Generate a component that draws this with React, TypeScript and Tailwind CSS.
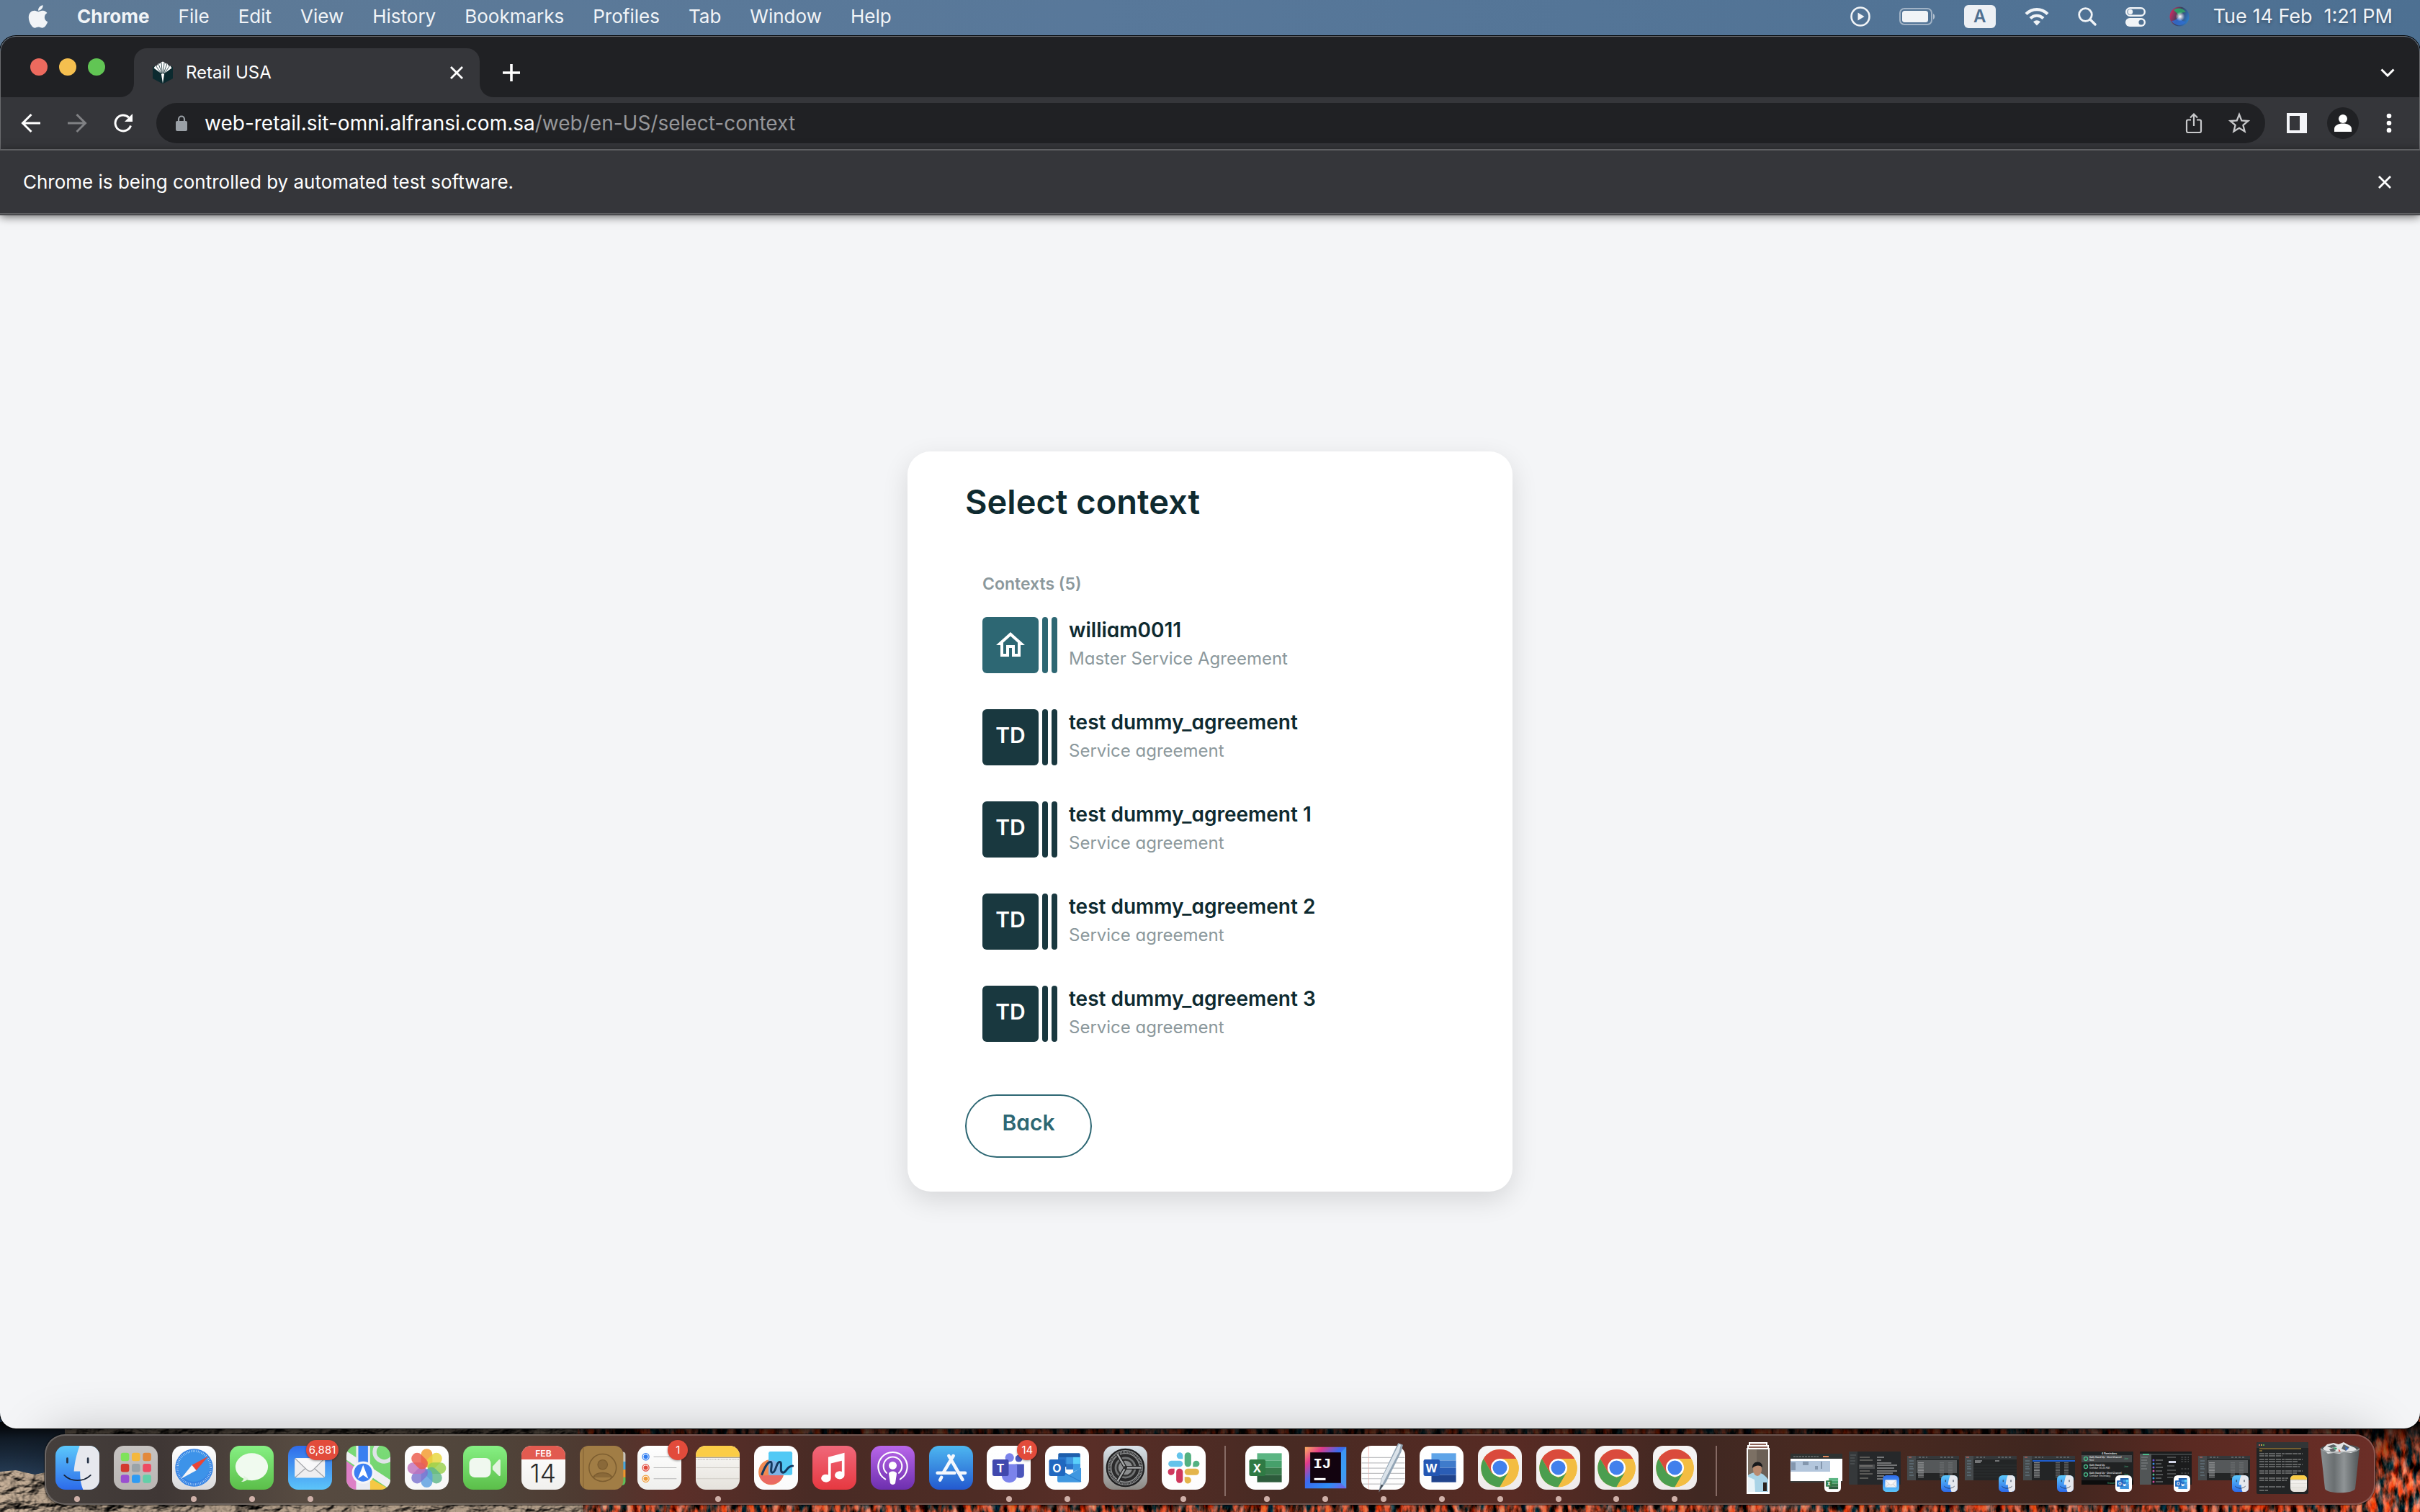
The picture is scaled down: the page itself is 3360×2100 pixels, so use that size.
import type { ReactNode } from "react";
import { FaApple } from "react-icons/fa";
import { MdOutlineHome } from "react-icons/md";

const menus = ["File", "Edit", "View", "History", "Bookmarks", "Profiles", "Tab", "Window", "Help"];

const contexts = [
  { name: "william0011", kind: "Master Service Agreement", home: true },
  { name: "test dummy_agreement", kind: "Service agreement" },
  { name: "test dummy_agreement 1", kind: "Service agreement" },
  { name: "test dummy_agreement 2", kind: "Service agreement" },
  { name: "test dummy_agreement 3", kind: "Service agreement" },
];

/* ---------- wallpaper ---------- */

function Wallpaper() {
  return (
    <svg className="absolute inset-0 h-full w-full" viewBox="0 0 3360 2100" preserveAspectRatio="none" aria-hidden="true">
      <defs>
        <linearGradient id="sky" x1="0" x2="1" y1="0" y2="0">
          <stop offset="0" stopColor="#5e7a96" />
          <stop offset="0.45" stopColor="#58789a" />
          <stop offset="1" stopColor="#4d7092" />
        </linearGradient>
        <linearGradient id="dusk" x1="0" x2="0" y1="0" y2="1">
          <stop offset="0" stopColor="#101a28" />
          <stop offset="0.5" stopColor="#22364d" />
          <stop offset="1" stopColor="#2c4560" />
        </linearGradient>
        <linearGradient id="shade" x1="0" x2="0" y1="0" y2="1">
          <stop offset="0" stopColor="#000" stopOpacity="0.95" />
          <stop offset="0.25" stopColor="#000" stopOpacity="0.5" />
          <stop offset="0.8" stopColor="#000" stopOpacity="0" />
        </linearGradient>
        <filter id="rock" x="0" y="0" width="1" height="1" colorInterpolationFilters="sRGB">
          <feTurbulence type="fractalNoise" baseFrequency="0.03 0.05" numOctaves="4" seed="7" />
          <feDiffuseLighting lightingColor="#cbb49c" surfaceScale="12">
            <feDistantLight azimuth="235" elevation="55" />
          </feDiffuseLighting>
          <feComposite in2="SourceGraphic" operator="in" />
        </filter>
        <filter id="grass" x="0" y="0" width="1" height="1" colorInterpolationFilters="sRGB">
          <feTurbulence type="fractalNoise" baseFrequency="0.1 0.04" numOctaves="4" seed="3" />
          <feColorMatrix values="3.200 0 0 0 -1.050  1 0.700 0 0 -0.600  0.500 0.900 0 0 -0.530  0 0 0 0 1" />
          <feComposite in2="SourceGraphic" operator="in" />
        </filter>
      </defs>
      <rect width="3360" height="300" fill="url(#sky)" />
      <rect y="1900" width="3360" height="200" fill="url(#dusk)" />
      <path d="M0 2044L22 2042L48 2048L90 2040V1980H1000V2100H0z" fill="#fff" filter="url(#rock)" />
      <path d="M800 1960H3360V2100H810z" fill="#fff" filter="url(#grass)" />
      <rect y="1975" width="3360" height="90" fill="url(#shade)" />
    </svg>
  );
}

/* ---------- menu bar ---------- */

function MenuBar() {
  return (
    <header className="relative flex h-12 items-center justify-between pb-0.5 pl-[39px] pr-[38px] text-[26px] leading-8 text-[#f1f4f7] [text-shadow:0_2px_4px_rgba(0,0,0,0.25)]">
      <nav className="flex items-center gap-10">
        <button aria-label="Apple menu">
          <FaApple className="h-9 w-7" />
        </button>
        <button className="font-bold">Chrome</button>
        {menus.map((m) => (
          <button key={m}>{m}</button>
        ))}
      </nav>
      <div className="flex items-center gap-[33px]">
        <div className="flex items-center gap-10">
          <button aria-label="Now playing">
            <svg className="size-7" viewBox="0 0 28 28" fill="currentColor">
              <circle cx="14" cy="14" r="12.5" fill="none" stroke="currentColor" strokeWidth="2.6" />
              <path d="M10.5 8.5v11l9-5.500z" />
            </svg>
          </button>
          <button aria-label="Battery">
            <svg className="h-6 w-[50px]" viewBox="0 0 50 24" fill="currentColor">
              <rect x="1" y="1" width="44" height="22" rx="6" fill="none" stroke="currentColor" strokeOpacity="0.5" strokeWidth="2" />
              <rect x="4" y="4" width="36" height="16" rx="3.500" />
              <path d="M47 8c3 1.500 3 6.500 0 8z" opacity="0.6" />
            </svg>
          </button>
          <button className="flex h-8 w-11 items-center justify-center rounded-md bg-[#edf0f4] text-[24px] font-semibold text-[#4f6f90] [text-shadow:none]">A</button>
          <button aria-label="Wi-Fi">
            <svg className="h-[26px] w-[34px]" viewBox="0 0 34 26" fill="none" stroke="currentColor" strokeWidth="4.200">
              <path d="M2 9.500C10.500 1 23.500 1 32 9.500" />
              <path d="M8 15.500c5.200-5 12.800-5 18 0" />
              <path d="M17 25.500l-5-5.200c3-2.800 7-2.800 10 0z" fill="currentColor" stroke="none" />
            </svg>
          </button>
          <button aria-label="Search">
            <svg className="size-[26px]" viewBox="0 0 26 26" fill="none" stroke="currentColor" strokeWidth="2.800" strokeLinecap="round">
              <circle cx="10.500" cy="10.500" r="8.800" />
              <path d="M17 17l7 7" strokeWidth="3.400" />
            </svg>
          </button>
          <button aria-label="Control Centre">
            <svg className="size-7" viewBox="0 0 28 28">
              <rect x="1.200" y="2.200" width="25.600" height="10.600" rx="5.300" fill="none" stroke="#f1f4f7" strokeWidth="2.400" />
              <circle cx="6.800" cy="7.500" r="3.400" fill="#f1f4f7" />
              <rect x="0" y="16" width="28" height="12" rx="6" fill="#f1f4f7" />
              <circle cx="22" cy="22" r="3.600" fill="#4f7193" />
            </svg>
          </button>
        </div>
        <button aria-label="Siri">
          <svg className="size-7" viewBox="0 0 28 28">
            <defs>
              <linearGradient id="siri" x1="0" x2="1" y1="0.3" y2="0.7">
                <stop offset="0" stopColor="#d22c62" />
                <stop offset="0.45" stopColor="#3b3f5c" />
                <stop offset="1" stopColor="#2b7fd0" />
              </linearGradient>
              <radialGradient id="siriCore">
                <stop offset="0" stopColor="#fff" />
                <stop offset="1" stopColor="#fff" stopOpacity="0" />
              </radialGradient>
            </defs>
            <circle cx="14" cy="14" r="13.500" fill="url(#siri)" />
            <path d="M6 5c5-4 13-3 17 3-5 0-9 2-10 5C11 9 8 7 6 5z" fill="#2f9a68" />
            <path d="M3 20c5 0 8-3 11-7 1 5 4 8 9 8-5 7-15 7-20-1z" fill="#2f6fd6" opacity="0.8" />
            <circle cx="15" cy="14" r="6.500" fill="url(#siriCore)" />
          </svg>
        </button>
        <time className="flex gap-4 text-[27px]">
          <span>Tue 14 Feb</span>
          <span>1:21 PM</span>
        </time>
      </div>
    </header>
  );
}

/* ---------- browser chrome ---------- */

function Cross() {
  return (
    <svg className="size-[18px]" viewBox="0 0 18 18" fill="none" stroke="currentColor" strokeWidth="2.800">
      <path d="M1 1l16 16M17 1L1 17" />
    </svg>
  );
}

function TabStrip() {
  return (
    <div className="flex h-[84px] items-end justify-between bg-[#202124] pr-[34px]">
      <div className="flex items-end">
        <div className="flex h-[84px] items-center gap-4 pl-[41px] pr-5">
          <button aria-label="Close window" className="size-6 rounded-full bg-[#ed6a5e]" />
          <button aria-label="Minimise window" className="size-6 rounded-full bg-[#f5bf4f]" />
          <button aria-label="Zoom window" className="size-6 rounded-full bg-[#61c554]" />
        </div>
        <div className="flex items-end">
          <svg className="size-5 text-[#35363a]" viewBox="0 0 20 20" fill="currentColor" aria-hidden="true">
            <path d="M20 0v20H0C12 20 20 12 20 0z" />
          </svg>
          <div className="flex h-[68px] w-[480px] items-center rounded-t-[18px] bg-[#35363a] pl-[26px] pr-[23px] text-white">
            <svg className="h-8 w-7" viewBox="0 0 28 32" aria-hidden="true">
              <path d="M0 8L5 6h18l5 2v16l-14 7.500L0 24z" fill="#0c2a2f" />
              <path d="M14 31L11.800 17 1.500 9.500 3.500 6.500 6 6.200 7.500 3.500l2.500-.3L12 1.500 14 .500l2 1 2 1.700 2.500.3L22 6.200l2.500.3 2 3L16.200 17z" fill="#fff" />
              <path d="M12 2l1.300 15M16 2l-1.300 15M8 3.500l5 14M20 3.500l-5 14M4.500 6.500l8 11.500M23.500 6.500l-8 11.500" stroke="#0c2a2f" strokeWidth="0.800" />
            </svg>
            <span className="ml-[18px] grow text-[24px] leading-8">Retail USA</span>
            <button aria-label="Close tab"><Cross /></button>
          </div>
          <svg className="size-5 text-[#35363a]" viewBox="0 0 20 20" fill="currentColor" aria-hidden="true">
            <path d="M0 0v20h20C8 20 0 12 0 0z" />
          </svg>
        </div>
        <button aria-label="New tab" className="mb-[22px] ml-3 text-white">
          <svg className="size-6" viewBox="0 0 24 24" stroke="currentColor" strokeWidth="3.600">
            <path d="M12 0v24M0 12h24" />
          </svg>
        </button>
      </div>
      <button aria-label="Search tabs" className="mb-7 text-white">
        <svg className="h-3 w-5" viewBox="0 0 20 12" fill="none" stroke="currentColor" strokeWidth="3">
          <path d="M1.500 1.500L10 10l8.500-8.500" />
        </svg>
      </button>
    </div>
  );
}

function Toolbar() {
  return (
    <div className="flex h-[72px] items-center bg-[#35363a] pl-7 pr-9 text-white">
      <div className="flex gap-9">
        <button aria-label="Back to previous page">
          <svg className="size-7" viewBox="0 0 28 28" fill="none" stroke="currentColor" strokeWidth="3">
            <path d="M27 14H3M14.500 2L2.500 14l12 12" />
          </svg>
        </button>
        <button aria-label="Forward" className="text-[#808184]">
          <svg className="size-7" viewBox="0 0 28 28" fill="none" stroke="currentColor" strokeWidth="3">
            <path d="M1 14h24M13.500 2l12 12-12 12" />
          </svg>
        </button>
        <button aria-label="Reload">
          <svg className="size-7" viewBox="0 0 28 28" fill="none" stroke="currentColor" strokeWidth="3">
            <path d="M24.500 17.500a11 11 0 1 1-2.600-11.200" />
            <path d="M27 1v11H16z" fill="currentColor" stroke="none" />
          </svg>
        </button>
      </div>
      <div className="ml-8 flex h-14 grow items-center rounded-full bg-[#202124] pl-[27px] pr-[21px]">
        <svg className="h-[22px] w-4 text-[#9aa0a6]" viewBox="0 0 16 22" aria-hidden="true">
          <path d="M4 9V5.500a4 4 0 0 1 8 0V9" fill="none" stroke="currentColor" strokeWidth="2.200" />
          <rect y="8" width="16" height="14" rx="2" fill="currentColor" />
        </svg>
        <label htmlFor="path" className="ml-6 text-[28px] leading-8">web-retail.sit-omni.alfransi.com.sa</label>
        <input id="path" aria-label="Address" defaultValue="/web/en-US/select-context" className="min-w-0 grow bg-transparent text-[28px] leading-8 text-[#96979a] outline-none" />
        <div className="flex items-center gap-9 text-[#c8c9cb]">
          <button aria-label="Share">
            <svg className="h-7 w-6" viewBox="0 0 24 28" fill="none" stroke="currentColor" strokeWidth="2.200">
              <path d="M8 9.500H4a2 2 0 0 0-2 2V25a2 2 0 0 0 2 2h16a2 2 0 0 0 2-2V11.500a2 2 0 0 0-2-2h-4M12 18V2M7 6.500l5-5 5 5" />
            </svg>
          </button>
          <button aria-label="Bookmark this tab">
            <svg className="size-[30px]" viewBox="0 0 30 30" fill="none" stroke="currentColor" strokeWidth="2.300">
              <path d="M15 3l3.300 8.300 9 .7-6.900 5.800 2.200 8.700L15 21.800l-7.600 4.700 2.200-8.700L2.700 12l9-.7z" />
            </svg>
          </button>
        </div>
      </div>
      <button aria-label="Side panel" className="ml-[30px]">
        <svg className="size-7" viewBox="0 0 28 28">
          <path d="M0 0h28v28H0zM4 4v20h14V4z" fill="#f4f5f8" fillRule="evenodd" />
        </svg>
      </button>
      <button aria-label="Profile" className="ml-7">
        <svg className="size-11" viewBox="0 0 44 44">
          <circle cx="22" cy="22" r="22" fill="#202124" />
          <circle cx="22" cy="16" r="6" fill="#fff" />
          <path d="M10 34v-4c0-5 6-7.500 12-7.500S34 25 34 30v4z" fill="#fff" />
        </svg>
      </button>
      <button aria-label="Chrome menu" className="ml-9">
        <svg className="h-7 w-3" viewBox="0 0 12 28" fill="currentColor">
          <circle cx="6" cy="4" r="3.300" />
          <circle cx="6" cy="14" r="3.300" />
          <circle cx="6" cy="24" r="3.300" />
        </svg>
      </button>
    </div>
  );
}

function InfoBar() {
  return (
    <div className="relative z-10 flex h-[91px] items-center justify-between border-y-2 border-[#5f6063] bg-[#35363a] pl-8 pr-10 text-[26px] leading-8 text-white shadow-[0_1px_0_0_#2b2c2f,0_3px_12px_rgba(0,0,0,0.6)]">
      <p>Chrome is being controlled by automated test software.</p>
      <button aria-label="Dismiss message"><Cross /></button>
    </div>
  );
}

/* ---------- page ---------- */

function Context({ name, kind, home }: { name: string; kind: string; home?: boolean }) {
  const tone = home ? "bg-[#2d6773]" : "bg-[#19383f]";
  return (
    <li>
      <button className="flex items-start text-left">
        <span className="flex gap-[5px]">
          <span className={`flex size-[78px] items-center justify-center rounded-md text-[30px] font-semibold text-white ${tone} ${home ? "" : "pb-1.5"}`}>
            {home ? <MdOutlineHome className="size-12" aria-label="Home" /> : "TD"}
          </span>
          <span className={`w-2 rounded ${tone}`} />
          <span className={`w-2 rounded ${tone}`} />
        </span>
        <span className="ml-4 flex flex-col gap-1 leading-9">
          <span className="text-[28px] font-semibold text-[#0e2a30]">{name}</span>
          <span className="text-[24px] text-[#8b989c]">{kind}</span>
        </span>
      </button>
    </li>
  );
}

function Page() {
  return (
    <main className="flex grow flex-col items-center justify-center bg-[#f4f5f7] [font-feature-settings:'cv11']">
      <section className="w-[840px] rounded-[32px] bg-white px-20 pb-[47px] pt-[42px] shadow-[0_12px_36px_rgba(0,0,0,0.12)]">
        <h1 className="text-[47px] font-semibold leading-[56px] text-[#0e2a30]">Select context</h1>
        <div className="mt-[70px] pl-6">
          <h2 className="text-[23px] font-semibold leading-8 text-[#8b989c]">Contexts (5)</h2>
          <ul className="mt-[30px] flex flex-col gap-[50px]">
            {contexts.map((c) => (
              <Context key={c.name} {...c} />
            ))}
          </ul>
        </div>
        <button className="mt-[73px] block h-[88px] w-44 rounded-full border-2 border-[#2d6773] pb-2.5 text-[30px] font-semibold text-[#2d6773]">Back</button>
      </section>
    </main>
  );
}

/* ---------- dock icons ---------- */

function Icon({ children }: { children: ReactNode }) {
  return (
    <svg className="size-full overflow-visible" viewBox="0 0 100 100" fontFamily="Inter, sans-serif" aria-hidden="true">
      {children}
    </svg>
  );
}

function Tile({ id, from, to }: { id: string; from: string; to: string }) {
  return (
    <>
      <defs>
        <linearGradient id={id} x1="0" x2="0" y1="0" y2="1">
          <stop offset="0" stopColor={from} />
          <stop offset="1" stopColor={to} />
        </linearGradient>
        <clipPath id="tileClip"><rect width="100" height="100" rx="23" /></clipPath>
      </defs>
      <rect width="100" height="100" rx="23" fill={`url(#${id})`} />
    </>
  );
}

function Finder() {
  return (
    <Icon>
      <Tile id="finder" from="#5cc8fb" to="#2c6bea" />
      <path d="M55 0C47 22 43 42 42 58h14c0 18 2 30 7 42h14a23 23 0 0 0 23-23V23A23 23 0 0 0 77 0z" fill="#e6e8ee" />
      <path d="M27 29v9M74 29v9" stroke="#253347" strokeWidth="4.500" strokeLinecap="round" />
      <path d="M20 67c16 16 44 16 60 0" fill="none" stroke="#172335" strokeWidth="3" strokeLinecap="round" />
    </Icon>
  );
}

function Launchpad() {
  const dots = ["#7fe35a", "#f5b83d", "#e3893c", "#d33b2f", "#9aa3a8", "#ee4a62", "#9a4fd0", "#2f9bf3", "#63cfa8"];
  return (
    <Icon>
      <Tile id="launch" from="#c6c3c1" to="#b9b5b3" />
      {dots.map((c, i) => (
        <rect key={c} x={16 + (i % 3) * 25} y={16 + Math.floor(i / 3) * 25} width="19" height="19" rx="5" fill={c} />
      ))}
    </Icon>
  );
}

function Safari() {
  return (
    <Icon>
      <Tile id="safari" from="#ffffff" to="#d9d9db" />
      <circle cx="50" cy="50" r="43" fill="#3583e4" />
      <circle cx="50" cy="46" r="36" fill="#46a3ee" opacity="0.5" />
      <circle cx="50" cy="50" r="38" fill="none" stroke="#d6e9fb" strokeWidth="5" strokeDasharray="1 2.980" />
      <path d="M82 24L55 56 45 44z" fill="#ea4335" />
      <path d="M20 75l25-31 10 12z" fill="#f5f5f6" />
    </Icon>
  );
}

function Messages() {
  return (
    <Icon>
      <Tile id="msgs" from="#86f083" to="#5bbe49" />
      <ellipse cx="50" cy="48" rx="37" ry="31" fill="#f0faef" />
      <path d="M31 68c2 6 0 11-5 14 8 0 13-3 16-8z" fill="#e3f3e0" />
    </Icon>
  );
}

function Mail() {
  return (
    <Icon>
      <Tile id="mail" from="#2f6bea" to="#5cc5fa" />
      <rect x="15" y="28" width="69" height="45" rx="4" fill="#eeeef0" />
      <path d="M16 72l25-22M83 72L58 50" stroke="#a5a7ab" strokeWidth="2" />
      <path d="M16 29l27 26c4 4 10 4 14 0l26-26" fill="#f8f8f9" stroke="#a5a7ab" strokeWidth="2" />
    </Icon>
  );
}

function Maps() {
  return (
    <Icon>
      <Tile id="maps" from="#7bdc78" to="#6fcf6b" />
      <g clipPath="url(#tileClip)">
        <path d="M0 35l24 18v47H0z" fill="#dd7fc6" />
        <path d="M54 74l46 26H54z" fill="#f5c844" />
        <path d="M0 12l100 66v22L0 32z" fill="#f0f0f4" />
        <path d="M22 0h32v100H22z" fill="#e9ebf2" />
        <path d="M27 0h22v58H27z" fill="#3a7ff0" />
        <circle cx="86" cy="14" r="22" fill="none" stroke="#dfe3e8" strokeWidth="9" />
      </g>
      <circle cx="38" cy="61" r="23" fill="#3b7ff2" stroke="#f4f5f8" strokeWidth="5" />
      <path d="M38 44l12 31-12-8-12 8z" fill="#fff" />
    </Icon>
  );
}

function Photos() {
  const petals = ["#f39a2c", "#e8d53a", "#98cf4b", "#5fb78a", "#5b9fe0", "#7c74cf", "#c072bd", "#ec5a4c"];
  return (
    <Icon>
      <Tile id="photos" from="#ffffff" to="#f7f7f7" />
      {petals.map((c, i) => (
        <rect key={c} x="37" y="7" width="26" height="42" rx="13" fill={c} opacity="0.82" transform={`rotate(${i * 45} 50 51)`} />
      ))}
    </Icon>
  );
}

function FaceTime() {
  return (
    <Icon>
      <Tile id="ftime" from="#86f083" to="#5bbe49" />
      <rect x="14" y="28" width="49" height="44" rx="12" fill="#f0f8ef" />
      <path d="M67 47l14-15c2-2 4-1 4 2v32c0 3-2 4-4 2L67 54z" fill="#e3f3e0" />
    </Icon>
  );
}

function Calendar() {
  return (
    <Icon>
      <Tile id="cal" from="#ffffff" to="#f1f0ee" />
      <path d="M0 31V23A23 23 0 0 1 23 0h54a23 23 0 0 1 23 23v8z" fill="#e25b50" />
      <text x="50" y="24" fontSize="20" fontWeight="600" fill="#fff" textAnchor="middle">FEB</text>
      <text x="49" y="84" fontSize="58" fontWeight="300" fill="#2a2a2a" textAnchor="middle">14</text>
    </Icon>
  );
}

function Contacts() {
  return (
    <Icon>
      <path d="M88 14h10a6 6 0 0 1 6 6v16H88z" fill="#c9c4ba" />
      <path d="M88 36h16v18H88z" fill="#47a8e0" />
      <path d="M88 54h16v18H88z" fill="#f0962e" />
      <path d="M88 72h16v10a8 8 0 0 1-8 8h-8z" fill="#5cc35a" />
      <rect width="99" height="100" rx="20" fill="#a17d45" />
      <path d="M8 4v92" stroke="#866535" strokeWidth="2" />
      <g stroke="#7c5d30" strokeWidth="2.500" fill="none">
        <circle cx="52" cy="50" r="31" />
        <path d="M31 72c6-14 36-14 42 0" fill="#8a6939" />
      </g>
      <circle cx="52" cy="43" r="11" fill="#8a6939" stroke="#7c5d30" strokeWidth="2" />
    </Icon>
  );
}

function Reminders() {
  return (
    <Icon>
      <Tile id="rem" from="#ffffff" to="#efefed" />
      {["#2f7cf0", "#e0483b", "#ee9a36"].map((c, i) => (
        <g key={c}>
          <circle cx="19" cy={25 + i * 25} r="7.500" fill="#fff" stroke={c} strokeWidth="2" />
          <circle cx="19" cy={25 + i * 25} r="5" fill={c} />
          <path d={`M37 ${25 + i * 25}h52`} stroke="#b9b9b9" strokeWidth="2" />
        </g>
      ))}
    </Icon>
  );
}

function Notes() {
  return (
    <Icon>
      <Tile id="notes" from="#fbfaf8" to="#e5e2dc" />
      <path d="M0 26v-3A23 23 0 0 1 23 0h54a23 23 0 0 1 23 23v3z" fill="#fbcd46" />
      <path d="M0 27h100" stroke="#a9a59c" strokeWidth="2" />
      <path d="M2 31h96" stroke="#b9b6b0" strokeWidth="2.500" strokeDasharray="1.500 2" />
      <path d="M1 50h98M1 75h98" stroke="#cfccc6" strokeWidth="2" />
    </Icon>
  );
}

function Freeform() {
  return (
    <Icon>
      <Tile id="free" from="#ffffff" to="#fbfbfb" />
      <circle cx="39" cy="60" r="29" fill="#f08a52" />
      <path d="M12 68c6 26 46 28 55-2z" fill="#ea6a62" />
      <rect x="33" y="13" width="54" height="54" rx="4" fill="#52c9f5" />
      <path d="M33 34c10-4 28 2 34 33H37a4 4 0 0 1-4-4z" fill="#7fb2e4" />
      <path d="M18 65c6-16 14-30 20-28s-4 24 4 24 8-24 16-24-2 24 8 24c8 0 8-15 22-15" fill="none" stroke="#15395f" strokeWidth="5" strokeLinecap="round" />
    </Icon>
  );
}

function Music() {
  return (
    <Icon>
      <Tile id="music" from="#f0687a" to="#e63840" />
      <path d="M36 26l37-10v51a11 9 0 1 1-6-8V34l-25 6v34a11 9 0 1 1-6-8z" fill="#fff" />
    </Icon>
  );
}

function Podcasts() {
  return (
    <Icon>
      <Tile id="pods" from="#b966ea" to="#6d2fae" />
      <g fill="none" stroke="#fff" strokeWidth="3.500" strokeLinecap="round">
        <path d="M33 76a33 33 0 1 1 34 0" />
        <path d="M36 62a21 21 0 1 1 28 0" />
      </g>
      <circle cx="50" cy="45" r="9" fill="#fff" />
      <path d="M41 64c0-8 18-8 18 0l-3 20c-1 6-11 6-12 0z" fill="#fff" />
    </Icon>
  );
}

function AppStore() {
  return (
    <Icon>
      <Tile id="store" from="#4db7f0" to="#2359cf" />
      <g stroke="#f4f8fd" strokeWidth="7.500" strokeLinecap="round">
        <path d="M55 23L33 60M45 23l31 54M19 62h39M70 62h12M28 72l-3 6" />
      </g>
    </Icon>
  );
}

function Letter({ fill, children }: { fill: string; children: string }) {
  return (
    <>
      <rect x="13" y="31" width="37" height="38" rx="4" fill={fill} />
      <text x="31" y="60" fontSize="27" fontWeight="700" fill="#fff" textAnchor="middle">{children}</text>
    </>
  );
}

function Teams() {
  return (
    <Icon>
      <Tile id="white" from="#ffffff" to="#fdfdfd" />
      <circle cx="73" cy="29" r="8" fill="#4a55bb" />
      <path d="M66 42h19v24c0 8-12 10-19 4z" fill="#4a55bb" />
      <circle cx="52" cy="27" r="10" fill="#7b83eb" />
      <path d="M34 42h35v24c0 24-35 24-35 0z" fill="#7b83eb" />
      <Letter fill="#4048ae">T</Letter>
    </Icon>
  );
}

function Outlook() {
  return (
    <Icon>
      <Tile id="white" from="#ffffff" to="#fdfdfd" />
      <path d="M30 20a3 3 0 0 1 3-3h44a3 3 0 0 1 3 3v28H30z" fill="#1d5eac" />
      <path d="M30 26h18v16H30z" fill="#2a76cc" />
      <path d="M48 26h16v16H48z" fill="#3f98e2" />
      <path d="M64 26h16v16H64z" fill="#5ad0fb" />
      <path d="M48 42h16v12H48z" fill="#2b74ca" />
      <path d="M64 42h16v10l-16 8z" fill="#3c9ae4" />
      <path d="M28 52l27 14 27-16v30a3 3 0 0 1-3 3H31a3 3 0 0 1-3-3z" fill="#3f97e0" />
      <path d="M40 60l42 22" stroke="#2c7fce" strokeWidth="2" />
      <rect x="9" y="31" width="37" height="38" rx="4" fill="#2068c0" />
      <text x="27" y="60" fontSize="26" fontWeight="700" fill="#fff" textAnchor="middle">O</text>
    </Icon>
  );
}

function Settings() {
  return (
    <Icon>
      <Tile id="sets" from="#dbe4ec" to="#8b8883" />
      <circle cx="50" cy="50" r="42" fill="#8f9192" stroke="#1f1f20" strokeWidth="4" />
      <circle cx="50" cy="50" r="36" fill="none" stroke="#2b2b2c" strokeWidth="5" strokeDasharray="2 1.500" />
      <circle cx="50" cy="50" r="28" fill="#717374" stroke="#2a2a2b" strokeWidth="7" />
      <circle cx="50" cy="50" r="18" fill="#8b8d8e" stroke="#333" strokeWidth="4" />
      <path d="M50 50h34M50 50L33 20M50 50L33 80" stroke="#1f1f20" strokeWidth="8" />
      <path d="M50 50h36M50 50L32 19M50 50L32 81" stroke="#a5a7a8" strokeWidth="4" />
      <circle cx="50" cy="50" r="4" fill="#2a2a2b" />
    </Icon>
  );
}

function Slack() {
  return (
    <Icon>
      <Tile id="white" from="#ffffff" to="#fdfdfd" />
      <g fill="#64c3ea">
        <rect x="15" y="34" width="33" height="14" rx="7" />
        <path d="M48 30h-7a7 7.500 0 1 1 7-7.500z" />
      </g>
      <g fill="#53b181">
        <rect x="52" y="15" width="15" height="33" rx="7.500" />
        <path d="M71 48v-7a7.500 7 0 1 1 7.500 7z" />
      </g>
      <g fill="#e4b54b">
        <rect x="52" y="52" width="33" height="15" rx="7.500" />
        <path d="M52 71h7a7.500 7.500 0 1 1-7 7.500z" />
      </g>
      <g fill="#cf375c">
        <rect x="33" y="52" width="15" height="33" rx="7.500" />
        <path d="M29 52v7a7.500 7.500 0 1 1-7.500-7z" />
      </g>
    </Icon>
  );
}

function Office({ letter, rows, tag }: { letter: string; rows: string[]; tag: string }) {
  return (
    <Icon>
      <Tile id="white" from="#ffffff" to="#fdfdfd" />
      {rows.map((c, i) => (
        <rect key={c} x="27" y={17 + i * 16.500} width="56" height="16.500" fill={c} />
      ))}
      <rect x="9" y="31" width="37" height="38" rx="4" fill={tag} />
      <text x="27" y="60" fontSize="26" fontWeight="700" fill="#fff" textAnchor="middle">{letter}</text>
    </Icon>
  );
}

const Excel = () => <Office letter="X" rows={["#5bb583", "#46a06b", "#387a4b", "#2d5c3c"]} tag="#2f7a44" />;
const Word = () => <Office letter="W" rows={["#5fa4e8", "#3f7bcb", "#2a5db5", "#1f438c"]} tag="#2457b3" />;

function IntelliJ() {
  return (
    <Icon>
      <defs>
        <linearGradient id="ij" x1="0" x2="1" y1="0" y2="1">
          <stop offset="0" stopColor="#fdb060" />
          <stop offset="0.22" stopColor="#e23a8a" />
          <stop offset="0.45" stopColor="#3a6cf0" />
          <stop offset="0.75" stopColor="#2f8df5" />
          <stop offset="1" stopColor="#7a5ce6" />
        </linearGradient>
      </defs>
      <path d="M3 3h94v94H3z" fill="url(#ij)" />
      <path d="M97 3v94l-12-12V15z" fill="#3fa4f4" opacity="0.7" />
      <path d="M15 15h70v70H15z" fill="#12030f" />
      <text x="22" y="51" fontSize="34" fontWeight="700" fontFamily="'Liberation Mono', monospace" fill="#fff">IJ</text>
      <path d="M24 76h26" stroke="#fff" strokeWidth="5" />
    </Icon>
  );
}

function TextEdit() {
  return (
    <Icon>
      <Tile id="white" from="#ffffff" to="#fdfdfd" />
      <path d="M17 2v96" stroke="#f3b9b5" strokeWidth="1.500" />
      <path d="M1 27h98M1 39h98M1 51h98M1 63h98M1 75h98M3 87h94" stroke="#bfc0c2" strokeWidth="2" />
      <path d="M84-6l11 4-4 16-34 68-17 24 5-30 31-66z" fill="#93a5b5" />
      <path d="M86-4l4 2-4 16-38 74-7 14 5-26 32-64z" fill="#dbe3ea" />
      <path d="M40 104l5-16 5 2z" fill="#444c55" />
    </Icon>
  );
}

function ChromeIcon() {
  return (
    <Icon>
      <Tile id="chrome" from="#f7f5f5" to="#eeebeb" />
      <circle cx="50" cy="51" r="43" fill="#f3bd42" />
      <path d="M50 51L31.500 61.700 12.800 29.500A43 43 0 0 1 87.200 29.500H50z" fill="#da4a3c" />
      <path d="M12.800 29.500L31.400 61.700 50 72.500 68.600 61.700 50 94A43 43 0 0 1 12.800 29.500z" fill="#4b9e4f" />
      <path d="M50 29.500h37.200A43 43 0 0 1 50 94l18.600-32.300z" fill="#f3bd42" />
      <circle cx="50" cy="50" r="20.500" fill="#fff" />
      <circle cx="50" cy="50" r="16.500" fill="#4280ec" />
    </Icon>
  );
}

function Trash() {
  return (
    <svg className="h-[72px] w-14 overflow-visible" viewBox="0 0 56 72" aria-hidden="true">
      <defs>
        <linearGradient id="bin" x1="0" x2="1" y1="0" y2="0">
          <stop offset="0" stopColor="#8b9092" />
          <stop offset="0.35" stopColor="#6a6f71" />
          <stop offset="0.6" stopColor="#8f9496" />
          <stop offset="1" stopColor="#4f5456" />
        </linearGradient>
      </defs>
      <path d="M1 9c6 6 48 6 54 0l-6 56c-4 7-38 7-42 0z" fill="url(#bin)" />
      <ellipse cx="28" cy="9" rx="27" ry="6" fill="#4d5153" />
      <path d="M4 9l6-6 9-2 7 2 7-3 7 4 9 4 3 4-9 3-10-1-6 2-8-1-8 1z" fill="#e4e5e6" />
      <path d="M10 6l9-3 5 3-8 2zM33 3l8 4-5 5-6-3zM13 10l6-2 3 4-6 2z" fill="#5f6568" />
      <path d="M18 7l6 1-2 3z" fill="#35a06a" />
      <path d="M26 9l3 4-3 1z" fill="#d65a4a" />
      <path d="M35 6l5 3-4 3z" fill="#3f6fc4" />
      <path d="M1 9c2 3 10 5 27 5s25-2 27-5" fill="none" stroke="#9da2a4" strokeWidth="1.500" />
    </svg>
  );
}

/* ---------- minimised windows ---------- */

function PhotoStack() {
  return (
    <svg className="h-[72px] w-8" viewBox="0 0 32 72" aria-hidden="true">
      <path d="M3 0h26v6H3z" fill="#fff" />
      <path d="M5 2h22v3H5z" fill="#8d6358" />
      <path d="M1 4h30v6H1z" fill="#fff" />
      <path d="M3 6h26v2H3z" fill="#8d6358" />
      <path d="M0 8h32v64H0z" fill="#fff" />
      <path d="M2 10h28v59H2z" fill="#6b6056" />
      <path d="M2 10h12v40H2z" fill="#7c7064" />
      <path d="M2 46c8-6 20-6 28 6v17H2z" fill="#a9d3e6" />
      <path d="M2 48l9 4 1 17H2z" fill="#e9f3f7" />
      <ellipse cx="15" cy="38" rx="6" ry="9" fill="#b98a6f" />
      <path d="M8 36c-1-11 15-11 14-1-4-4-10-3-14 1z" fill="#17181b" />
      <path d="M23 56h5v12h-5z" fill="#2a211d" />
    </svg>
  );
}

function SheetWindow() {
  return (
    <svg className="h-10 w-[72px]" viewBox="0 0 72 40" aria-hidden="true">
      <path d="M0 0h72v40H0z" fill="#fff" />
      <path d="M0 0h72v7H0z" fill="#2e3231" />
      <path d="M4 4h36" stroke="#8b8f8e" strokeDasharray="3 1" />
      <path d="M45 3h8v2h-8z" fill="#e08a5e" />
      <path d="M0 10h55v15H0z" fill="#b3c6dc" />
      <path d="M1 12h6v11H1zM17 11h8v5h-8zM34 17h4v5h-4zM42 11h2v10h-2z" fill="#8497ae" />
      <path d="M0 38h72v2H0z" fill="#3c403f" />
    </svg>
  );
}

function MailWindow() {
  return (
    <svg className="h-[46px] w-[72px]" viewBox="0 0 72 46" aria-hidden="true">
      <path d="M0 0h72v46H0z" fill="#26282a" />
      <path d="M0 0h12v46H0z" fill="#35383a" />
      <path d="M14 18h22v6H14z" fill="#4a4c4e" />
      <path d="M15 8h14M15 12h18M15 20h18M15 27h14M15 31h18M15 37h12" stroke="#8e8b84" />
      <path d="M39 8h10M39 12h6M39 16h20M39 19h28M39 23h24M39 27h28M39 30h22M39 34h10M39 38h8" stroke="#c1c2c3" />
      <path d="M2 5h8M2 9h6M2 13h7M2 17h6" stroke="#5c6063" />
    </svg>
  );
}

function FinderWindow({ mark }: { mark: "grey" | "none" | "blue" }) {
  return (
    <svg className="h-[34px] w-[72px]" viewBox="0 0 72 34" aria-hidden="true">
      <path d="M0 0h72v34H0z" fill="#232526" />
      <path d="M0 0h12v34H0z" fill="#45494b" />
      <path d="M12 0h60v5H12z" fill="#35383a" />
      <path d="M2 2h4" stroke="#d9695f" />
      <path d="M3 7h6M3 11h6M3 15h5M3 18h6M3 23h5M3 27h6" stroke="#6f8390" />
      <path d="M16 2h12M46 2h18" stroke="#85888a" strokeDasharray="3 2" />
      {mark === "none" ? (
        <path d="M14 7h10M14 9h8M42 7h6" stroke="#c3c5c6" />
      ) : (
        <g>
          <path d={mark === "grey" ? "M13 6h56v18H13z" : "M13 6h59v2H13z"} fill={mark === "grey" ? "#55585a" : "#1f5fd0"} />
          <path d="M19 9v22" stroke="#8f9193" strokeWidth="8" strokeDasharray="1.200 1" />
          <path d="M48 9v22M60 9v22" stroke="#686b6d" strokeWidth="6" strokeDasharray="1.200 1" />
        </g>
      )}
      {mark === "none" && <path d="M12 13h60M12 17h60M12 21h60M12 25h60M12 29h60" stroke="#2d3031" />}
    </svg>
  );
}

function ReminderWindow() {
  return (
    <svg className="h-[46px] w-[72px]" viewBox="0 0 72 46" fontFamily="Inter, sans-serif" fontSize="4" fill="#e2e3e4" aria-hidden="true">
      <path d="M0 0h72v46H0z" fill="#202223" />
      <path d="M0 5h70v10H0z" fill="#45484a" />
      <path d="M0 40h72v6H0z" fill="#0c0d0d" />
      <text x="28" y="4" fontSize="3.500" fontWeight="600">4 Reminders</text>
      {[10, 21, 32].map((y) => (
        <circle key={y} cx="6" cy={y} r="2.500" fill="none" stroke="#49b787" strokeWidth="1.300" />
      ))}
      <text x="11" y="9" fontSize="3" fontWeight="600">Daily Stand Up - Omni Channel</text>
      <text x="11" y="13" fontSize="3">Now</text>
      <text x="11" y="20" fontSize="3" fontWeight="600">Daily Stand Up</text>
      <text x="11" y="24" fontSize="3">Overdue (10:30 AM)</text>
      <text x="11" y="31" fontSize="3" fontWeight="600">Daily Stand Up - Omni Channel</text>
      <text x="11" y="35" fontSize="3">Overdue (Yesterday)</text>
      <g fill="#49b787" fontSize="3">
        <text x="59" y="11">Join</text>
        <text x="59" y="22">Join</text>
        <text x="59" y="33">Join</text>
        <text x="36" y="45">Snooze</text>
      </g>
    </svg>
  );
}

function OutlookWindow() {
  return (
    <svg className="h-[46px] w-[72px]" viewBox="0 0 72 46" aria-hidden="true">
      <path d="M0 0h72v46H0z" fill="#1b1c1d" />
      <path d="M0 3h16v43H0z" fill="#515556" />
      <path d="M4 3h9v2H4z" fill="#4fb98a" />
      <path d="M16 3h56v2H16z" fill="#3c4041" />
      <path d="M2 8h9M2 12h8M2 16h9M2 20h7M2 24h8" stroke="#85898a" />
      {["#6a4fd0", "#3a8fe0", "#7b5ad8", "#d05ab0", "#4fb98a", "#3a8fe0", "#d0479a"].map((c, i) => (
        <circle key={i} cx="19" cy={12 + i * 5} r="1.500" fill={c} />
      ))}
      <path d="M22 12h10M22 17h8M22 22h10M22 27h9M22 32h10M22 37h8M22 42h10" stroke="#8d9091" />
      <path d="M38 8h12M38 20h10M38 26h12M38 31h12M38 36h8" stroke="#77797b" />
      <path d="M40 13h10v3H40z" fill="#cfd2e2" />
      <path d="M57 8h12M57 11h12M57 14h12M57 24h12M57 30h12" stroke="#6d6f71" strokeDasharray="1 1" />
    </svg>
  );
}

function NotesWindow() {
  return (
    <svg className="h-[72px] w-[72px]" viewBox="0 0 72 72" aria-hidden="true">
      <rect width="72" height="72" rx="2" fill="#222425" />
      <path d="M0 2a2 2 0 0 1 2-2h68a2 2 0 0 1 2 2v6H0z" fill="#323536" />
      <circle cx="4" cy="4" r="1" fill="#ed6a5e" />
      <circle cx="7" cy="4" r="1" fill="#f5bf4f" />
      <circle cx="10" cy="4" r="1" fill="#61c554" />
      <path d="M4 9h58M4 12h4" stroke="#c79b3c" />
      <path d="M4 16h60M4 19h32M4 24h60M4 27h54M4 31h60M4 34h56M4 40h60M4 43h52M4 50h40M4 53h38M4 62h36M4 67h12" stroke="#9fa1a2" strokeDasharray="7 1 4 1 9 1" />
    </svg>
  );
}

/* ---------- dock ---------- */

type App = { name: string; icon: ReactNode; open?: boolean; badge?: string };

const apps: App[] = [
  { name: "Finder", icon: <Finder />, open: true },
  { name: "Launchpad", icon: <Launchpad /> },
  { name: "Safari", icon: <Safari />, open: true },
  { name: "Messages", icon: <Messages />, open: true },
  { name: "Mail", icon: <Mail />, open: true, badge: "6,881" },
  { name: "Maps", icon: <Maps /> },
  { name: "Photos", icon: <Photos /> },
  { name: "FaceTime", icon: <FaceTime /> },
  { name: "Calendar", icon: <Calendar /> },
  { name: "Contacts", icon: <Contacts /> },
  { name: "Reminders", icon: <Reminders />, badge: "1" },
  { name: "Notes", icon: <Notes />, open: true },
  { name: "Freeform", icon: <Freeform /> },
  { name: "Music", icon: <Music /> },
  { name: "Podcasts", icon: <Podcasts /> },
  { name: "App Store", icon: <AppStore /> },
  { name: "Teams", icon: <Teams />, open: true, badge: "14" },
  { name: "Outlook", icon: <Outlook />, open: true },
  { name: "System Settings", icon: <Settings /> },
  { name: "Slack", icon: <Slack />, open: true },
];

const recent: App[] = [
  { name: "Excel", icon: <Excel />, open: true },
  { name: "IntelliJ IDEA", icon: <IntelliJ />, open: true },
  { name: "TextEdit", icon: <TextEdit />, open: true },
  { name: "Word", icon: <Word />, open: true },
  { name: "Chrome 1", icon: <ChromeIcon />, open: true },
  { name: "Chrome 2", icon: <ChromeIcon />, open: true },
  { name: "Chrome 3", icon: <ChromeIcon />, open: true },
  { name: "Chrome 4", icon: <ChromeIcon />, open: true },
];

const windows: { name: string; view: ReactNode; owner?: ReactNode }[] = [
  { name: "Downloads", view: <PhotoStack /> },
  { name: "Workbook", view: <SheetWindow />, owner: <Excel /> },
  { name: "Inbox", view: <MailWindow />, owner: <Mail /> },
  { name: "Folder 1", view: <FinderWindow mark="grey" />, owner: <Finder /> },
  { name: "Folder 2", view: <FinderWindow mark="none" />, owner: <Finder /> },
  { name: "Folder 3", view: <FinderWindow mark="blue" />, owner: <Finder /> },
  { name: "Outlook reminders", view: <ReminderWindow />, owner: <Outlook /> },
  { name: "Outlook mail", view: <OutlookWindow />, owner: <Outlook /> },
  { name: "Folder 4", view: <FinderWindow mark="grey" />, owner: <Finder /> },
  { name: "Note", view: <NotesWindow />, owner: <Notes /> },
  { name: "Bin", view: <Trash /> },
];

function DockApp({ name, icon, open, badge }: App) {
  return (
    <li className="flex flex-1 flex-col items-center gap-[9px]">
      <button aria-label={name} className="relative size-[61px]">
        {icon}
        {badge && (
          <span className="absolute -right-[9px] -top-2 flex h-7 min-w-7 items-center justify-center rounded-full bg-[#e24b3b] px-1 text-[15px] text-white shadow-[0_1px_3px_rgba(0,0,0,0.4)]">
            {badge}
          </span>
        )}
      </button>
      {open && <span className="size-2 rounded-full bg-[#cfb0a8]" />}
    </li>
  );
}

function Divider() {
  return (
    <li aria-hidden="true" className="flex w-[35px] justify-center">
      <span className="h-[70px] w-0.5 bg-[#866a64]" />
    </li>
  );
}

function Dock() {
  return (
    <footer className="relative mx-[62px] mb-2.5 mt-2 h-[98px] rounded-[28px] border-2 border-white/20 bg-[linear-gradient(90deg,#453f3c_0%,#3f3735_5%,#574b41_11%,#50453b_19%,#4e3a31_23%,#5c2f29_27%,#492b25_33%,#4e2c25_40%,#592e27_45%,#472a23_53%,#582b24_63%,#402822_71%,#4a2a21_77%,#3f261f_86%,#5a2a22_92%,#6b2e27_100%)] bg-origin-border shadow-[0_0_1px_1px_rgba(0,0,0,0.5),0_0_70px_rgba(0,0,0,0.25)]">
      <ul className="flex h-full pl-[3px] pr-1.5 pt-3.5">
        {apps.map((a) => (
          <DockApp key={a.name} {...a} />
        ))}
        <Divider />
        {recent.map((a) => (
          <DockApp key={a.name} {...a} />
        ))}
        <Divider />
        {windows.map((w) => (
          <li key={w.name} className="flex flex-1 justify-center">
            <button aria-label={w.name} className="relative flex h-[61px] w-[72px] items-center justify-center">
              {w.view}
              {w.owner && <span className="absolute -bottom-[3px] right-0.5 size-[23px]">{w.owner}</span>}
            </button>
          </li>
        ))}
      </ul>
    </footer>
  );
}

export default function App() {
  return (
    <div className="relative flex min-h-screen flex-col overflow-hidden font-['Inter',sans-serif]">
      <Wallpaper />
      <MenuBar />
      <div className="relative mt-0.5 flex grow flex-col overflow-hidden rounded-[22px] shadow-[0_0_0_1px_#000]">
        <div className="overflow-hidden rounded-t-[22px] border-x border-t border-[#6a6b6e]">
          <TabStrip />
          <Toolbar />
        </div>
        <InfoBar />
        <Page />
      </div>
      <Dock />
    </div>
  );
}
